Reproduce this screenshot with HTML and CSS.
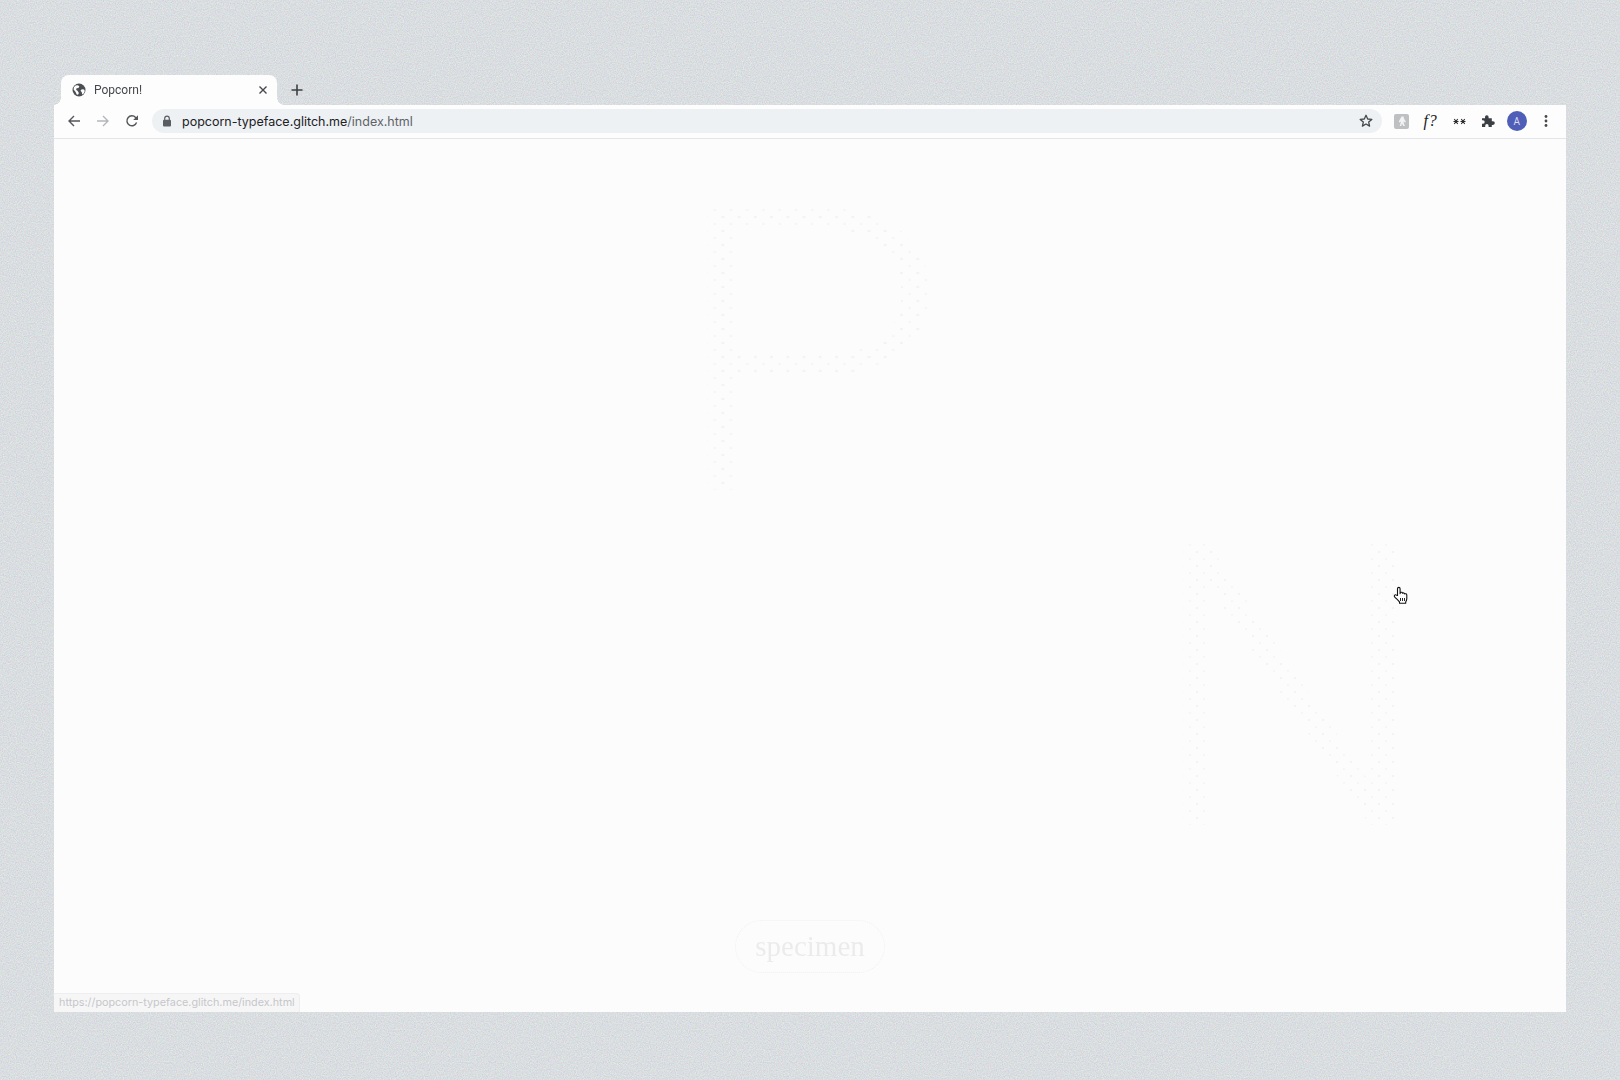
FILE: index.html
```html
<!DOCTYPE html>
<html lang="en">
<head>
<meta charset="utf-8">
<title>Popcorn!</title>
<link rel="stylesheet" href="styles.css">
</head>
<body>
<svg class="grain" aria-hidden="true"><filter id="grain" color-interpolation-filters="sRGB" x="0" y="0" width="100%" height="100%"><feTurbulence type="fractalNoise" baseFrequency="0.85" numOctaves="2" seed="4"/><feColorMatrix type="matrix" values=".2 0 0 0 .752  0 .2 0 0 .768  0 0 .2 0 .78  0 0 0 0 1"/></filter><rect width="100%" height="100%" filter="url(#grain)"/></svg>
<main class="window">
  <div class="tabstrip">
    <div class="tab">
      <svg class="favicon" viewBox="0 0 14 14" width="14" height="14"><circle cx="7" cy="7" r="6.5" fill="#4b4e52"/><path d="M3.500 2.600 6 2.200l1.400 1.200-1 1.500-1.800.4-.5 1.400 1.600 1.200 1.200 2-.9 1.900-1.300-.3L3.600 9 1.600 6.600 1.900 4.300z M9.800 6.200l2.300.3.700 1.600-1.100 2.300-1.500 1-.4-2.100-1.300-1.500z" fill="#fdfdfd"/></svg>
      <span class="tab-title">Popcorn!</span>
      <svg class="tab-close" viewBox="0 0 10 10" width="10" height="10"><path d="M1.500 1.500l7 7M8.500 1.500l-7 7" stroke="#45484c" stroke-width="1.400" fill="none"/></svg>
    </div>
    <svg class="new-tab" viewBox="0 0 12 12" width="12" height="12"><path d="M6 .5v11M.5 6h11" stroke="#3c4043" stroke-width="1.600" fill="none"/></svg>
  </div>
  <div class="toolbar">
    <span class="tool"><svg viewBox="0 0 14 14" width="14" height="14"><path d="M13 7H2M7 2 2 7l5 5" stroke="#53565a" stroke-width="1.400" fill="none"/></svg></span>
    <span class="tool"><svg viewBox="0 0 14 14" width="14" height="14"><path d="M1 7h11M7 2l5 5-5 5" stroke="#b4b6b9" stroke-width="1.400" fill="none"/></svg></span>
    <span class="tool"><svg viewBox="0 0 14 14" width="14" height="14"><path d="M11.600 8.600A5 5 0 1 1 10.600 3.400L12.400 5" stroke="#53565a" stroke-width="1.400" fill="none"/><path d="M13 1.200V6H8.200z" fill="#53565a"/></svg></span>
    <div class="omnibox">
      <svg class="lock" viewBox="0 0 10 12" width="10" height="12"><path d="M2.700 5V3.400a2.300 2.300 0 0 1 4.600 0V5" stroke="#5a5d61" stroke-width="1.200" fill="none"/><rect x="1" y="4.800" width="8" height="6.700" rx="1" fill="#5a5d61"/></svg>
      <span class="url"><span class="domain">popcorn-typeface.glitch.me</span><span class="path">/index.html</span></span>
      <svg class="star" viewBox="0 0 14 14" width="14" height="14"><path d="M7 1.300 8.700 5l4.100.4-3.100 2.700.9 4L7 10l-3.600 2.100.9-4L1.200 5.400 5.300 5z" fill="none" stroke="#45484c" stroke-width="1.300" stroke-linejoin="round"/></svg>
    </div>
    <div class="extensions">
      <span class="tool ext"><span class="ext-box"><svg viewBox="0 0 14 14" width="14" height="14"><path d="M6.500 2.500h2L9 4.500 11 8l-1.300.6L8.800 7l-.1 2 1.200 3H8.300L7 9.500 6.200 12H4.700L6 7.500 4.500 8.500 3.800 7.500z" fill="#f3f3f3"/></svg></span></span>
      <span class="tool ext"><span class="fq">f?</span></span>
      <span class="tool ext"><svg viewBox="0 0 13 7" width="13" height="7"><path d="M.5 3.500h5M7.500 3.500h5M1.300 1l3.400 5M4.700 1 1.300 6M8.300 1l3.400 5M11.700 1 8.300 6" stroke="#2a2c2f" stroke-width="1.100"/></svg></span>
      <span class="tool ext"><svg viewBox="0 0 14 14" width="14" height="14"><path d="M1 4.300h3V3a1.800 1.800 0 0 1 3.600 0v1.300h3.200v3h1.200a1.800 1.800 0 0 1 0 3.600h-1.200V13H7.600v-1.200a1.700 1.700 0 0 0-3.400 0V13H1V9.700h1a1.700 1.700 0 0 0 0-3.400H1z" fill="#3c3f43"/></svg></span>
      <span class="tool ext"><span class="avatar">A</span></span>
      <span class="tool ext"><svg viewBox="0 0 4 14" width="4" height="14"><circle cx="2" cy="2.500" r="1.400" fill="#45484c"/><circle cx="2" cy="7" r="1.400" fill="#45484c"/><circle cx="2" cy="11.500" r="1.400" fill="#45484c"/></svg></span>
    </div>
  </div>
  <div class="content">
    <span class="ghost ghost-p">P</span>
    <span class="ghost ghost-n">N</span>
    <div class="pill"><span class="pill-text">specimen</span></div>
    <div class="status">https://popcorn-typeface.glitch.me/index.html</div>
    <svg class="cursor" viewBox="0 0 16 20" width="16" height="20"><path d="M4.500 9.500V2.700a1.300 1.300 0 0 1 2.600 0v5l.3-1.300c1.200-.5 2-.1 2.100.9.900-.7 1.900-.4 2.100.6 1-.5 2.200-.1 2.200 1.300v3.400c0 1.500-.5 2.500-1.100 3.400v1.300H6.500v-1.500C5 14 3.400 12.700 1.600 10.800c-1-1.300.6-2.500 1.500-1.900z" fill="#fff" stroke="#111" stroke-width="1.100" stroke-linejoin="round"/><path d="M7.500 12v3M9.500 12v3M11.500 12v3" stroke="#111" stroke-width=".9"/></svg>
  </div>
</main>
</body>
</html>
```

FILE: styles.css
```css
html, body { margin: 0; height: 100%; }
body {
  box-sizing: border-box;
  height: 1080px;
  overflow: hidden;
  padding: 75px 54px 68px;
  background-color: #d8dcdf;
  font-family: Roboto, "Liberation Sans", sans-serif;
}
.grain { position: fixed; left: 0; top: 0; width: 100%; height: 100%; z-index: -1; }
.window { display: flex; flex-direction: column; height: 100%; }

.tabstrip { display: flex; align-items: center; flex: none; height: 30px; padding-left: 7px; }
.tab {
  position: relative;
  box-sizing: border-box;
  display: flex;
  align-items: center;
  width: 216px;
  height: 30px;
  padding: 0 9px 0 11px;
  background: #fdfdfd;
  border-radius: 8px 8px 0 0;
}
.tab::before, .tab::after {
  content: "";
  position: absolute;
  bottom: 0;
  width: 7px;
  height: 7px;
}
.tab::before { left: -7px; background: radial-gradient(circle at 0 0, transparent 6.500px, #fdfdfd 7px); }
.tab::after { right: -7px; background: radial-gradient(circle at 100% 0, transparent 6.500px, #fdfdfd 7px); }
.tab-title { flex: 1; margin-left: 8px; font-size: 12px; color: #45484c; }
.new-tab { margin-left: 14px; }

.toolbar {
  box-sizing: border-box;
  flex: none;
  display: flex;
  align-items: center;
  height: 34px;
  padding: 0 6px 1px 5px;
  background: #fdfdfd;
  border-bottom: 1px solid #e3e5e9;
}
.tool { display: flex; align-items: center; justify-content: center; flex: none; width: 29px; height: 28px; }
.omnibox {
  flex: 1;
  display: flex;
  align-items: center;
  height: 24px;
  margin-left: 6px;
  padding: 0 9px 0 10px;
  background: #eef1f4;
  border-radius: 12px;
}
.lock { flex: none; }
.url { flex: 1; margin-left: 10px; font-family: Inter, Roboto, sans-serif; font-size: 12.500px; }
.domain { color: #202124; }
.path { color: #5f6368; }
.extensions { display: flex; margin-left: 5.500px; }
.ext { width: 28.800px; }
.ext-box {
  display: flex;
  align-items: center;
  justify-content: center;
  width: 15px;
  height: 15px;
  background: #bfc0c1;
  border-radius: 2px;
}
.fq { font-family: "Liberation Serif", serif; font-style: italic; font-size: 16px; color: #202124; letter-spacing: .8px; }
.avatar {
  display: flex;
  align-items: center;
  justify-content: center;
  width: 20px;
  height: 20px;
  border-radius: 50%;
  background: #4f5eb6;
  color: #d9dcf2;
  font-size: 10px;
}

.content {
  position: relative;
  flex: 1;
  display: flex;
  flex-direction: column;
  align-items: center;
  justify-content: flex-end;
  padding-bottom: 39px;
  background: #fcfcfc;
  overflow: hidden;
}
.ghost {
  position: absolute;
  font-family: Roboto, sans-serif;
  font-weight: 300;
  font-size: 397px;
  line-height: .8;
  color: transparent;
  background-image:
    radial-gradient(circle, #f5f2f3 1px, transparent 1.600px),
    radial-gradient(circle, #f6f6f7 1px, transparent 1.600px);
  background-size: 14px 14px, 14px 14px;
  background-position: 0 0, 7px 7px;
  -webkit-background-clip: text;
  background-clip: text;
}
.ghost-p { left: 612px; top: 57px; transform: scaleX(1.16); transform-origin: left center; }
.ghost-n { left: 1094px; top: 392px; }
.pill {
  position: relative;
  box-sizing: border-box;
  display: flex;
  align-items: center;
  justify-content: center;
  width: 150px;
  height: 53px;
  border: 1px dotted #f0f0f0;
  border-radius: 27px;
}
.pill-text {
  font-family: "Liberation Serif", serif;
  font-size: 29px;
  line-height: 1.2;
  color: transparent;
  background-image: radial-gradient(circle, #ebebeb .8px, transparent 1.100px);
  background-size: 2px 2px;
  -webkit-background-clip: text;
  background-clip: text;
}
.status {
  position: absolute;
  left: 0;
  bottom: 0;
  box-sizing: border-box;
  width: 246px;
  height: 19px;
  padding-left: 5px;
  line-height: 18px;
  white-space: nowrap;
  background: #f6f6f7;
  border: 1px solid #eeeef0;
  border-width: 1px 1px 0 0;
  border-top-right-radius: 4px;
  font-family: Inter, Roboto, sans-serif;
  font-size: 10.800px;
  color: #c6c6ca;
}
.cursor { position: absolute; left: 1339px; top: 447px; }
```
